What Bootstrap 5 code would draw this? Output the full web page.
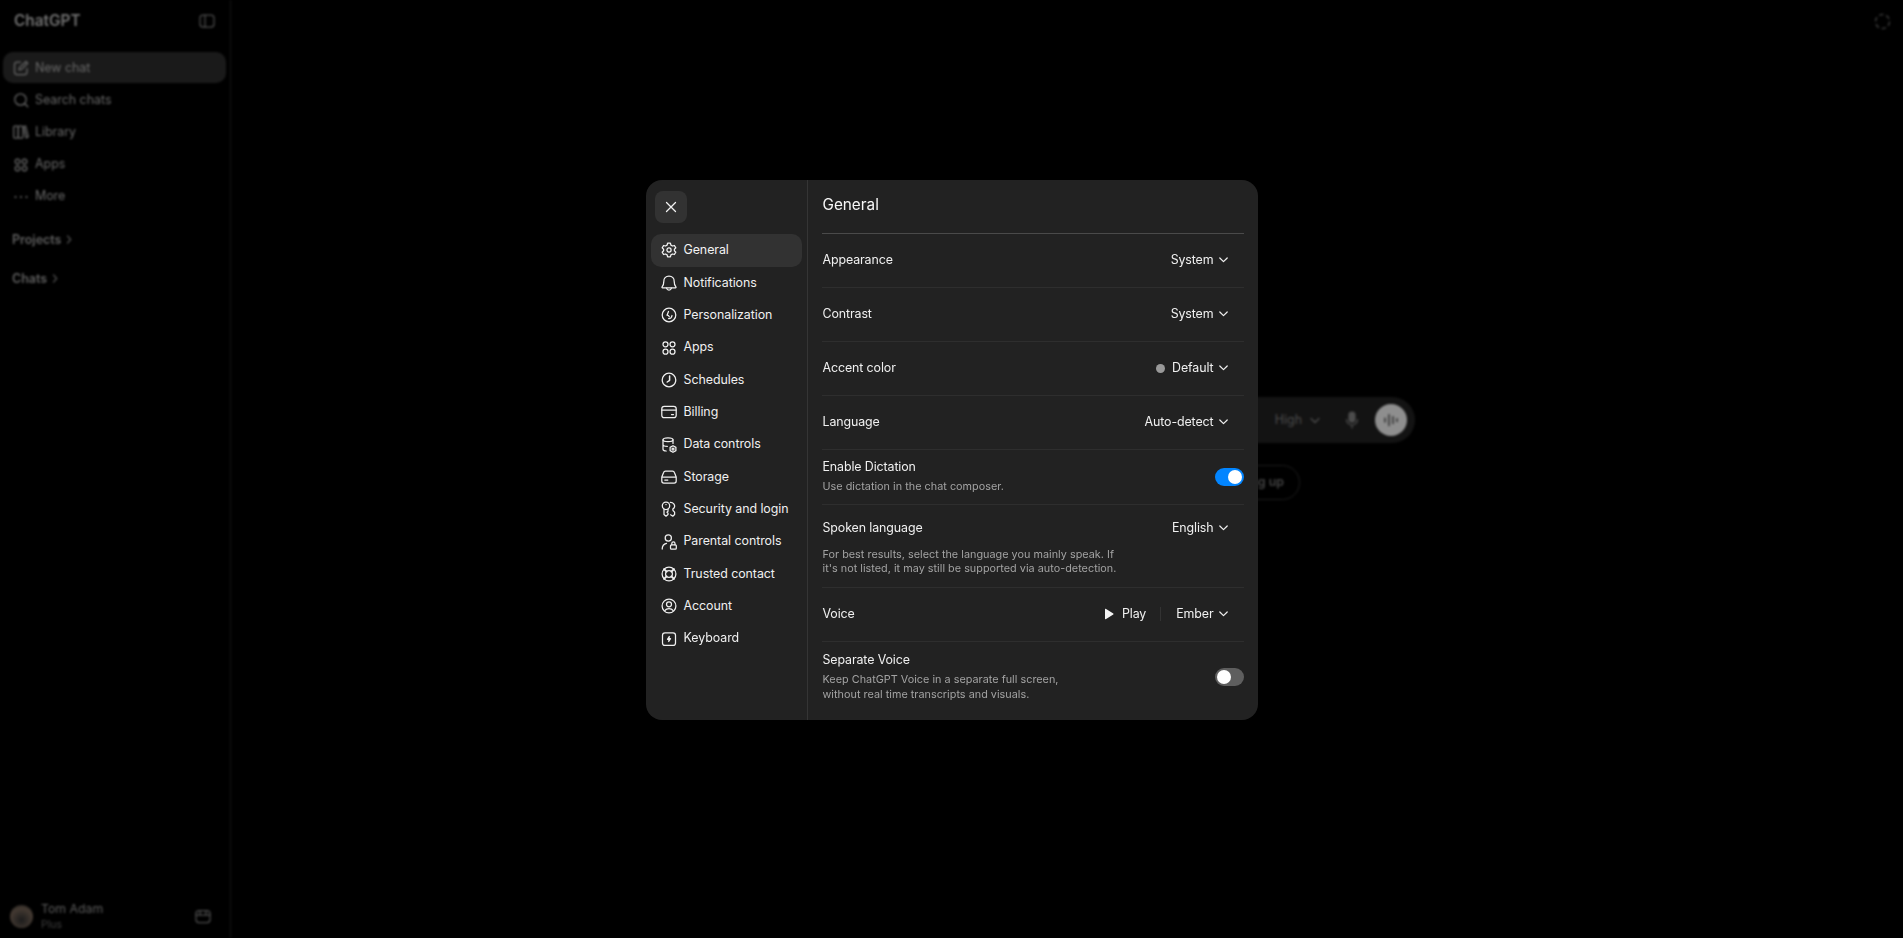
<!doctype html>
<html lang="en" data-bs-theme="dark">
<head>
<meta charset="utf-8">
<title>ChatGPT settings</title>
<link href="https://cdn.jsdelivr.net/npm/bootstrap@5.3.0/dist/css/bootstrap.min.css" rel="stylesheet">
<style>
html,body{height:100%;margin:0;background:#000;overflow:hidden}
body{font-family:Inter,"Liberation Sans",sans-serif;color:#ececec}
.ic{fill:none;stroke:currentColor;stroke-width:1.25;stroke-linecap:round;stroke-linejoin:round;flex:none}
.pageframe{height:938px;filter:blur(1.2px)}
.sidepane{width:231px;border-right:1px solid #141414;padding:0 3px;color:#686868;font-size:12.4px}
.brandrow{height:52px;padding:0 12px 10px 11px}
.brandname{font-size:15.4px;font-weight:600;color:#727272}
.dimglyph{color:#4c4c4c}
.sidelink{height:32.2px;padding:1px 10px 0;gap:6px;border-radius:10px;color:#686868}
.sidelink.current{background:#1a1a1a;height:31px;margin-bottom:.6px;width:223px}
.sidehead{font-weight:600;font-size:12.5px;padding-left:9px;gap:4px;color:#606060;line-height:19px}
.sidehead.first{margin-top:18px}
.sidehead.next{margin-top:20px}
.userrow{padding:0 0 5px 7px;gap:8px}
.avatar{width:23px;height:23px;border-radius:50%;background:radial-gradient(circle at 50% 65%,#1c1c1c,#443a32 60%,#1a1a1a)}
.username{font-size:12.3px;line-height:17px;color:#5c5c5c}
.userplan{font-size:10.5px;line-height:16px;color:#3e3e3e}
.mainpane{padding-bottom:41px}
.topglyph{top:13px;right:12px;color:#363636}
.composer{width:696px;height:46px;background:#131313;border-radius:23px;padding-right:8px;color:#4c4c4c;font-size:12.4px}
.micspot{margin:0 16px 0 25px}
.voicebtn{width:32px;height:32px;border-radius:50%;background:#8e8e8e;color:#1c1c1c}
.chiprow{width:696px;padding-right:115px;margin-top:22px}
.chip{height:35px;padding:0 15px;border:1px solid #1c1c1c;border-radius:18px;color:#444;font-weight:600;font-size:12.4px}
.overlay{padding-top:180px}
.settingsbox{width:612px;height:540px;background:#222;border-radius:16px;overflow:hidden}
.settingsnav{width:162px;border-right:1px solid #353535;padding:0 5px}
.closebtn{width:32px;height:32px;margin:11px 0 11.3px 4px;background:#323232;border:0;border-radius:8px;color:#f2f2f2}
.navstack{--bs-nav-link-padding-y:0;--bs-nav-link-padding-x:10px;--bs-nav-pills-border-radius:10px;--bs-nav-pills-link-active-bg:#323232;--bs-nav-pills-link-active-color:#f4f4f4;--bs-nav-link-color:#f0f0f0;--bs-nav-link-hover-color:#f0f0f0;--bs-nav-link-font-size:12.4px;--bs-nav-link-font-weight:400}
.navstack .nav-link{height:32.35px;width:151px;gap:7px;letter-spacing:-.05px;white-space:nowrap}
.settingsbody{padding:0 14px}
.paneltitle{height:54px;padding:1px 0 3px 1px;border-bottom:1px solid #4a4a4a;font-size:15.3px;font-weight:400;color:#f6f6f6;margin:0}
.optrow{height:54px;border-bottom:1px solid #2e2e2e;font-size:12.4px;letter-spacing:-.1px;color:#f0f0f0}
.optrow.rowdict{height:55px}
.optrow.rowspoken{height:83px;display:block;padding-top:13px}
.optrow.rowsep{height:79px;border-bottom:0;padding-bottom:10px}
.optrow .lbl{line-height:20px;padding-left:1px;position:relative;top:-.5px}
.subcopy{font-size:10.8px;line-height:15px;color:#a3a3a3;letter-spacing:.03px;padding-left:1px}
.subcopy.tight{line-height:14px;margin-top:10px}
.dictcopy{padding-bottom:3px}
.dictcopy .subcopy{margin-top:3px;line-height:14px}
.sepcopy{padding-bottom:1px}
.sepcopy .subcopy{margin-top:1px}
.pick{padding-right:16px;gap:5px;line-height:20px;position:relative;top:-.5px}
.pick .ic{stroke-width:1.2}
.dot{width:9px;height:9px;border-radius:50%;background:#999;margin-right:2.5px}
.tri{margin-right:3px}
.vbar{width:1px;height:14px;background:#333;margin:0 10px 0 9px}
.toggletrack{width:29px;height:18px;border-radius:9px;background:#5e5e5e;padding:2px;flex:none}
.toggletrack.on{background:#0285ff;justify-content:flex-end}
.toggleknob{width:14px;height:14px;border-radius:50%;background:#fff}
</style>
</head>
<body>
<div class="pageframe d-flex">
  <aside class="sidepane d-flex flex-column">
    <div class="brandrow d-flex align-items-center justify-content-between">
      <span class="brandname">ChatGPT</span>
      <svg class="ic dimglyph" width="16" height="14" viewBox="0 0 16 14"><rect x="1" y="1" width="14" height="12" rx="3"/><path d="M6 1v12"/></svg>
    </div>
    <a class="sidelink current d-flex align-items-center text-decoration-none">
      <svg class="ic" width="16" height="16" viewBox="0 0 16 16"><path d="M7.500 2H4a2.500 2.500 0 0 0-2.500 2.500V12A2.500 2.500 0 0 0 4 14.500h7.500A2.500 2.500 0 0 0 14 12V8.500"/><path d="M6 10l.6-2.600L13 1.500l1.700 1.700-6.100 6.200z"/></svg><span>New chat</span></a>
    <a class="sidelink d-flex align-items-center text-decoration-none">
      <svg class="ic" width="16" height="16" viewBox="0 0 16 16"><circle cx="7.500" cy="7.500" r="5.700"/><path d="M11.800 11.800l3 3"/></svg><span>Search chats</span></a>
    <a class="sidelink d-flex align-items-center text-decoration-none">
      <svg class="ic" width="16" height="16" viewBox="0 0 16 16"><rect x=".7" y="2" width="4.600" height="12" rx="1"/><rect x="5.300" y="2" width="4.600" height="12" rx="1"/><path d="M10.500 2.500l2-.5 2.800 11-2.200.8z"/></svg><span>Library</span></a>
    <a class="sidelink d-flex align-items-center text-decoration-none">
      <svg class="ic" width="16" height="16" viewBox="0 0 16 16"><circle cx="4.500" cy="4.500" r="2.300"/><circle cx="11.500" cy="4.500" r="2.300"/><circle cx="4.500" cy="11.500" r="2.300"/><circle cx="11.500" cy="11.500" r="2.300"/></svg><span>Apps</span></a>
    <a class="sidelink d-flex align-items-center text-decoration-none">
      <svg class="ic" width="16" height="16" viewBox="0 0 16 16"><path d="M2.500 8h.01M8 8h.01M13.500 8h.01" stroke-width="2"/></svg><span>More</span></a>
    <div class="sidehead first d-flex align-items-center"><span>Projects</span><svg class="ic dimglyph" width="8" height="9" viewBox="0 0 8 9"><path d="M2.500 1l3.200 3.500L2.500 8"/></svg></div>
    <div class="sidehead next d-flex align-items-center"><span>Chats</span><svg class="ic dimglyph" width="8" height="9" viewBox="0 0 8 9"><path d="M2.500 1l3.200 3.500L2.500 8"/></svg></div>
    <div class="userrow mt-auto d-flex align-items-center">
      <span class="avatar flex-none"></span>
      <div class="flex-grow-1"><div class="username">Tom Adam</div><div class="userplan">Plus</div></div>
      <svg class="ic dimglyph me-3" width="16" height="15" viewBox="0 0 16 15"><rect x="1" y="1.500" width="14" height="12" rx="3"/><path d="M1 6h14M5 1.500V6M11 1.500V6"/></svg>
    </div>
  </aside>
  <main class="mainpane flex-grow-1 position-relative d-flex flex-column align-items-center justify-content-center">
    <svg class="topglyph position-absolute ic" width="17" height="17" viewBox="0 0 17 17"><circle cx="8.500" cy="8.500" r="7" stroke-dasharray="4.500 2.830" stroke-width="1.600" stroke-linecap="butt"/></svg>
    <div class="composer d-flex align-items-center justify-content-end">
      <span class="me-2">High</span>
      <svg class="ic" width="10" height="7" viewBox="0 0 10 7"><path d="M1 1.500l4 4 4-4"/></svg>
      <svg class="ic micspot" width="14" height="18" viewBox="0 0 14 18"><rect x="4" y="1" width="6" height="10" rx="3" fill="currentColor"/><path d="M1.500 8.500a5.500 5.500 0 0 0 11 0M7 14v3"/></svg>
      <span class="voicebtn d-flex align-items-center justify-content-center"><svg class="ic" width="18" height="14" viewBox="0 0 18 14" stroke-width="1.600"><path d="M3 5v4M7 1.500v11M11 3.500v7M15 5.500v3"/></svg></span>
    </div>
    <div class="chiprow d-flex justify-content-end"><span class="chip d-flex align-items-center">Look something up</span></div>
  </main>
</div>

<div class="overlay position-fixed top-0 start-0 w-100 h-100 d-flex justify-content-center align-items-start">
  <section class="settingsbox d-flex">
    <div class="settingsnav d-flex flex-column">
      <button class="closebtn d-flex align-items-center justify-content-center" aria-label="Close"><svg class="ic" width="14" height="14" viewBox="0 0 14 14" stroke-width="1.500"><path d="M2.500 2.500l9 9M11.500 2.500l-9 9"/></svg></button>
      <nav class="nav nav-pills flex-column navstack">
        <a class="nav-link active d-flex align-items-center"><svg class="ic" width="16" height="16" viewBox="0 0 16 16"><path d="M6.600 1.200h2.800l.5 1.900 1.600.9 1.900-.5 1.400 2.400-1.400 1.400v1.400l1.400 1.400-1.400 2.400-1.900-.5-1.600.9-.5 1.900H6.600l-.5-1.900-1.600-.9-1.900.5-1.400-2.400 1.400-1.400V7.300L1.200 5.900l1.400-2.400 1.900.5 1.600-.9z"/><circle cx="8" cy="8" r="2.100"/></svg>General</a>
        <a class="nav-link d-flex align-items-center"><svg class="ic" width="16" height="16" viewBox="0 0 16 16"><path d="M8 1.200c-3.400 0-5.200 2.500-5.200 5.200 0 2.800-.6 4.300-1.700 5.500-.3.400-.1.900.4.900h13c.5 0 .7-.5.400-.9-1.100-1.200-1.700-2.700-1.700-5.500 0-2.700-1.800-5.200-5.200-5.200z"/><path d="M5.600 13.200c.3 1.400 1.200 2 2.400 2s2.100-.6 2.400-2"/></svg>Notifications</a>
        <a class="nav-link d-flex align-items-center"><svg class="ic" width="16" height="16" viewBox="0 0 16 16"><circle cx="8" cy="8" r="6.800"/><path d="M7.500 4.500L6 8.200c1 .1 1.800.5 2.300 1.500M11 8.500c-.2 2-1.600 3.100-3.400 3.100"/></svg>Personalization</a>
        <a class="nav-link d-flex align-items-center"><svg class="ic" width="16" height="16" viewBox="0 0 16 16"><circle cx="4.500" cy="4.300" r="2.500"/><circle cx="11.500" cy="4.300" r="2.500"/><circle cx="4.500" cy="11.700" r="2.500"/><circle cx="11.500" cy="11.700" r="2.500"/></svg>Apps</a>
        <a class="nav-link d-flex align-items-center"><svg class="ic" width="16" height="16" viewBox="0 0 16 16"><circle cx="8" cy="8" r="6.800"/><path d="M8.600 4v4.300L6.200 10" stroke-width="1.500"/></svg>Schedules</a>
        <a class="nav-link d-flex align-items-center"><svg class="ic" width="16" height="16" viewBox="0 0 16 16"><rect x=".8" y="2.300" width="14.400" height="11.400" rx="2.500"/><path d="M.8 6h14.400M10.500 10.500h2"/></svg>Billing</a>
        <a class="nav-link d-flex align-items-center"><svg class="ic" width="16" height="16" viewBox="0 0 16 16"><ellipse cx="7" cy="2.800" rx="5" ry="1.900"/><path d="M2 2.800v9.400c0 1 1.300 1.700 3.200 1.800M12 2.800v3.600M2 7.500c0 1 1.800 1.800 4.300 1.900"/><circle cx="12" cy="12" r="1"/><path d="M12 8.700l2.900 1.650v3.300L12 15.300l-2.900-1.650v-3.300z"/></svg>Data controls</a>
        <a class="nav-link d-flex align-items-center"><svg class="ic" width="16" height="16" viewBox="0 0 16 16"><path d="M4.500 2.200h7c1 0 1.700.6 2 1.500l1.700 4.300v4c0 1.200-.9 2-2 2H2.800c-1.100 0-2-.8-2-2V8l1.700-4.300c.3-.9 1-1.500 2-1.500zM.8 8h14.400M3.800 11h3"/></svg>Storage</a>
        <a class="nav-link d-flex align-items-center"><svg class="ic" width="16" height="16" viewBox="0 0 16 16"><circle cx="5" cy="4.800" r="3.700"/><path d="M3 8v5.500l2 1.700 2-1.700v-1.400l-1-.9 1-1V8M4.900 3.500h.2M9.300 1.300c2.900-.2 5 2.700 4.100 5-.3.8-.9 1.400-1.600 1.800l.2 1.400 1.600 1.600v2.400l-1.800 1.700-2.200-1.400"/></svg>Security and login</a>
        <a class="nav-link d-flex align-items-center"><svg class="ic" width="16" height="16" viewBox="0 0 16 16"><circle cx="7.300" cy="4" r="3.100"/><path d="M1.200 15c0-3 1.700-5 4.300-5.600"/><rect x="9.500" y="10.800" width="5.800" height="4.400" rx="1"/><path d="M10.800 10.800V9.500a1.600 1.600 0 0 1 3.200 0v1.300"/></svg>Parental controls</a>
        <a class="nav-link d-flex align-items-center"><svg class="ic" width="16" height="16" viewBox="0 0 16 16"><circle cx="8" cy="8" r="6.900"/><circle cx="8" cy="8" r="3.400"/><path d="M3.100 3.100l2.500 2.500M12.900 3.100l-2.500 2.500M3.100 12.900l2.500-2.500M12.900 12.900l-2.500-2.500" stroke-width="2"/></svg>Trusted contact</a>
        <a class="nav-link d-flex align-items-center"><svg class="ic" width="16" height="16" viewBox="0 0 16 16"><circle cx="8" cy="8" r="6.900"/><circle cx="8" cy="6.300" r="2.500"/><path d="M3.800 12.600c1-1.400 2.500-2 4.200-2s3.200.6 4.200 2"/></svg>Account</a>
        <a class="nav-link d-flex align-items-center"><svg class="ic" width="16" height="16" viewBox="0 0 16 16"><rect x="1.500" y="1.800" width="13" height="12.600" rx="2.500"/><path d="M8.300 5.500L6.500 8.300h1.700L7.700 10.500l1.800-2.800H7.800z" fill="currentColor"/></svg>Keyboard</a>
      </nav>
    </div>
    <div class="settingsbody flex-grow-1">
      <h2 class="paneltitle d-flex align-items-center">General</h2>
      <div class="optrow d-flex align-items-center justify-content-between"><span class="lbl">Appearance</span><span class="pick d-flex align-items-center">System<svg class="ic" width="9" height="6" viewBox="0 0 9 6"><path d="M.8 1l3.700 3.700L8.200 1"/></svg></span></div>
      <div class="optrow d-flex align-items-center justify-content-between"><span class="lbl">Contrast</span><span class="pick d-flex align-items-center">System<svg class="ic" width="9" height="6" viewBox="0 0 9 6"><path d="M.8 1l3.700 3.700L8.200 1"/></svg></span></div>
      <div class="optrow d-flex align-items-center justify-content-between"><span class="lbl">Accent color</span><span class="pick d-flex align-items-center"><span class="dot"></span>Default<svg class="ic" width="9" height="6" viewBox="0 0 9 6"><path d="M.8 1l3.700 3.700L8.200 1"/></svg></span></div>
      <div class="optrow d-flex align-items-center justify-content-between"><span class="lbl">Language</span><span class="pick d-flex align-items-center">Auto-detect<svg class="ic" width="9" height="6" viewBox="0 0 9 6"><path d="M.8 1l3.700 3.700L8.200 1"/></svg></span></div>
      <div class="optrow rowdict d-flex align-items-center justify-content-between">
        <div class="dictcopy"><div class="lbl">Enable Dictation</div><div class="subcopy">Use dictation in the chat composer.</div></div>
        <span class="toggletrack on d-flex" role="switch" aria-checked="true"><span class="toggleknob"></span></span>
      </div>
      <div class="optrow rowspoken">
        <div class="d-flex justify-content-between"><span class="lbl">Spoken language</span><span class="pick d-flex align-items-center">English<svg class="ic" width="9" height="6" viewBox="0 0 9 6"><path d="M.8 1l3.700 3.700L8.200 1"/></svg></span></div>
        <div class="subcopy tight">For best results, select the language you mainly speak. If<br>it's not listed, it may still be supported via auto-detection.</div>
      </div>
      <div class="optrow d-flex align-items-center justify-content-between"><span class="lbl">Voice</span>
        <span class="pick d-flex align-items-center"><svg width="10" height="12" viewBox="0 0 10 12" class="tri"><path d="M1 1.200v9.600c0 .4.400.6.700.4l7.600-4.800c.3-.2.300-.6 0-.8L1.700.8C1.400.6 1 .8 1 1.200z" fill="#f4f4f4"/></svg>Play<span class="vbar"></span>Ember<svg class="ic" width="9" height="6" viewBox="0 0 9 6"><path d="M.8 1l3.700 3.700L8.200 1"/></svg></span></div>
      <div class="optrow rowsep d-flex align-items-center justify-content-between">
        <div class="sepcopy"><div class="lbl">Separate Voice</div><div class="subcopy">Keep ChatGPT Voice in a separate full screen,<br>without real time transcripts and visuals.</div></div>
        <span class="toggletrack d-flex" role="switch" aria-checked="false"><span class="toggleknob"></span></span>
      </div>
    </div>
  </section>
</div>
<script src="https://cdn.jsdelivr.net/npm/bootstrap@5.3.0/dist/js/bootstrap.bundle.min.js"></script>
</body>
</html>
